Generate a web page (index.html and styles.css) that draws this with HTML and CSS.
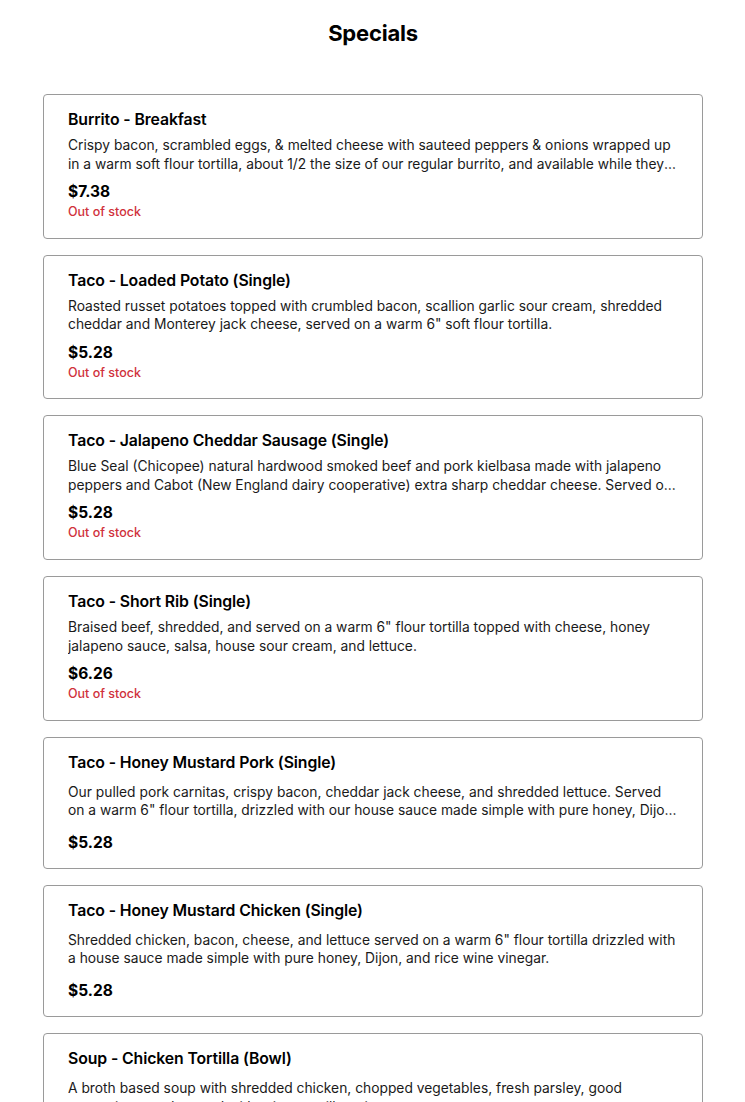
FILE: index.html
```html
<!DOCTYPE html>
<html lang="en">
<head>
<meta charset="utf-8">
<title>Specials</title>
<link rel="stylesheet" href="styles.css">
</head>
<body>
<main class="page">
  <h1 class="page-title">Specials</h1>
  <ul class="items">
    <li class="item item--oos">
      <h2 class="item-name">Burrito - Breakfast</h2>
      <p class="item-desc">Crispy bacon, scrambled eggs, &amp; melted cheese with sauteed peppers &amp; onions wrapped up in a warm soft flour tortilla, about 1/2 the size of our regular burrito, and available while they last each morning.</p>
      <div class="item-price">$7.38</div>
      <div class="item-stock">Out of stock</div>
    </li>
    <li class="item item--oos">
      <h2 class="item-name">Taco - Loaded Potato (Single)</h2>
      <p class="item-desc">Roasted russet potatoes topped with crumbled bacon, scallion garlic sour cream, shredded cheddar and Monterey jack cheese, served on a warm 6" soft flour tortilla.</p>
      <div class="item-price">$5.28</div>
      <div class="item-stock">Out of stock</div>
    </li>
    <li class="item item--oos">
      <h2 class="item-name">Taco - Jalapeno Cheddar Sausage (Single)</h2>
      <p class="item-desc">Blue Seal (Chicopee) natural hardwood smoked beef and pork kielbasa made with jalapeno peppers and Cabot (New England dairy cooperative) extra sharp cheddar cheese. Served on a warm 6" flour tortilla.</p>
      <div class="item-price">$5.28</div>
      <div class="item-stock">Out of stock</div>
    </li>
    <li class="item item--oos">
      <h2 class="item-name">Taco - Short Rib (Single)</h2>
      <p class="item-desc">Braised beef, shredded, and served on a warm 6" flour tortilla topped with cheese, honey jalapeno sauce, salsa, house sour cream, and lettuce.</p>
      <div class="item-price">$6.26</div>
      <div class="item-stock">Out of stock</div>
    </li>
    <li class="item">
      <h2 class="item-name">Taco - Honey Mustard Pork (Single)</h2>
      <p class="item-desc">Our pulled pork carnitas, crispy bacon, cheddar jack cheese, and shredded lettuce. Served on a warm 6" flour tortilla, drizzled with our house sauce made simple with pure honey, Dijon, and rice wine vinegar.</p>
      <div class="item-price">$5.28</div>
    </li>
    <li class="item">
      <h2 class="item-name">Taco - Honey Mustard Chicken (Single)</h2>
      <p class="item-desc">Shredded chicken, bacon, cheese, and lettuce served on a warm 6" flour tortilla drizzled with a house sauce made simple with pure honey, Dijon, and rice wine vinegar.</p>
      <div class="item-price">$5.28</div>
    </li>
    <li class="item">
      <h2 class="item-name">Soup - Chicken Tortilla (Bowl)</h2>
      <p class="item-desc">A broth based soup with shredded chicken, chopped vegetables, fresh parsley, good seasonings, and topped with crispy tortilla strips.</p>
      <div class="item-price">$7.50</div>
    </li>
  </ul>
</main>
</body>
</html>
```

FILE: styles.css
```css
* { box-sizing: border-box; }

html, body {
  margin: 0;
  padding: 0;
  background: #ffffff;
}

body {
  font-family: Inter, "Noto Sans", "Liberation Sans", sans-serif;
  color: #000000;
}

.page {
  padding: 19px 42px 0 43px;
}

.page-title {
  margin: 0 0 47px;
  font-size: 22px;
  line-height: 28px;
  font-weight: 700;
  text-align: center;
  letter-spacing: -0.2px;
}

.items {
  list-style: none;
  margin: 0;
  padding: 0;
  display: flex;
  flex-direction: column;
  gap: 16px;
}

.item {
  border: 1px solid #9a9a9a;
  border-radius: 4px;
  padding: 15px 24px 15.2px 24px;
  display: flex;
  flex-direction: column;
}

.item--oos {
  padding-bottom: 16.7px;
}

.item-name {
  margin: 0;
  font-size: 15.8px;
  line-height: 20px;
  font-weight: 600;
  letter-spacing: -0.1px;
}

.item-desc {
  margin: 10px 0 0;
  font-size: 13.8px;
  line-height: 18.5px;
  color: #1a1a1a;
  display: -webkit-box;
  -webkit-line-clamp: 2;
  -webkit-box-orient: vertical;
  overflow: hidden;
}

.item--oos .item-desc {
  margin-top: 6px;
}

.item-price {
  margin-top: 13px;
  font-size: 15.5px;
  line-height: 20px;
  font-weight: 700;
}

.item--oos .item-price {
  margin-top: 9px;
}

.item-stock {
  margin-top: 1px;
  font-size: 12.5px;
  line-height: 18px;
  font-weight: 500;
  color: #d0313c;
}
```
